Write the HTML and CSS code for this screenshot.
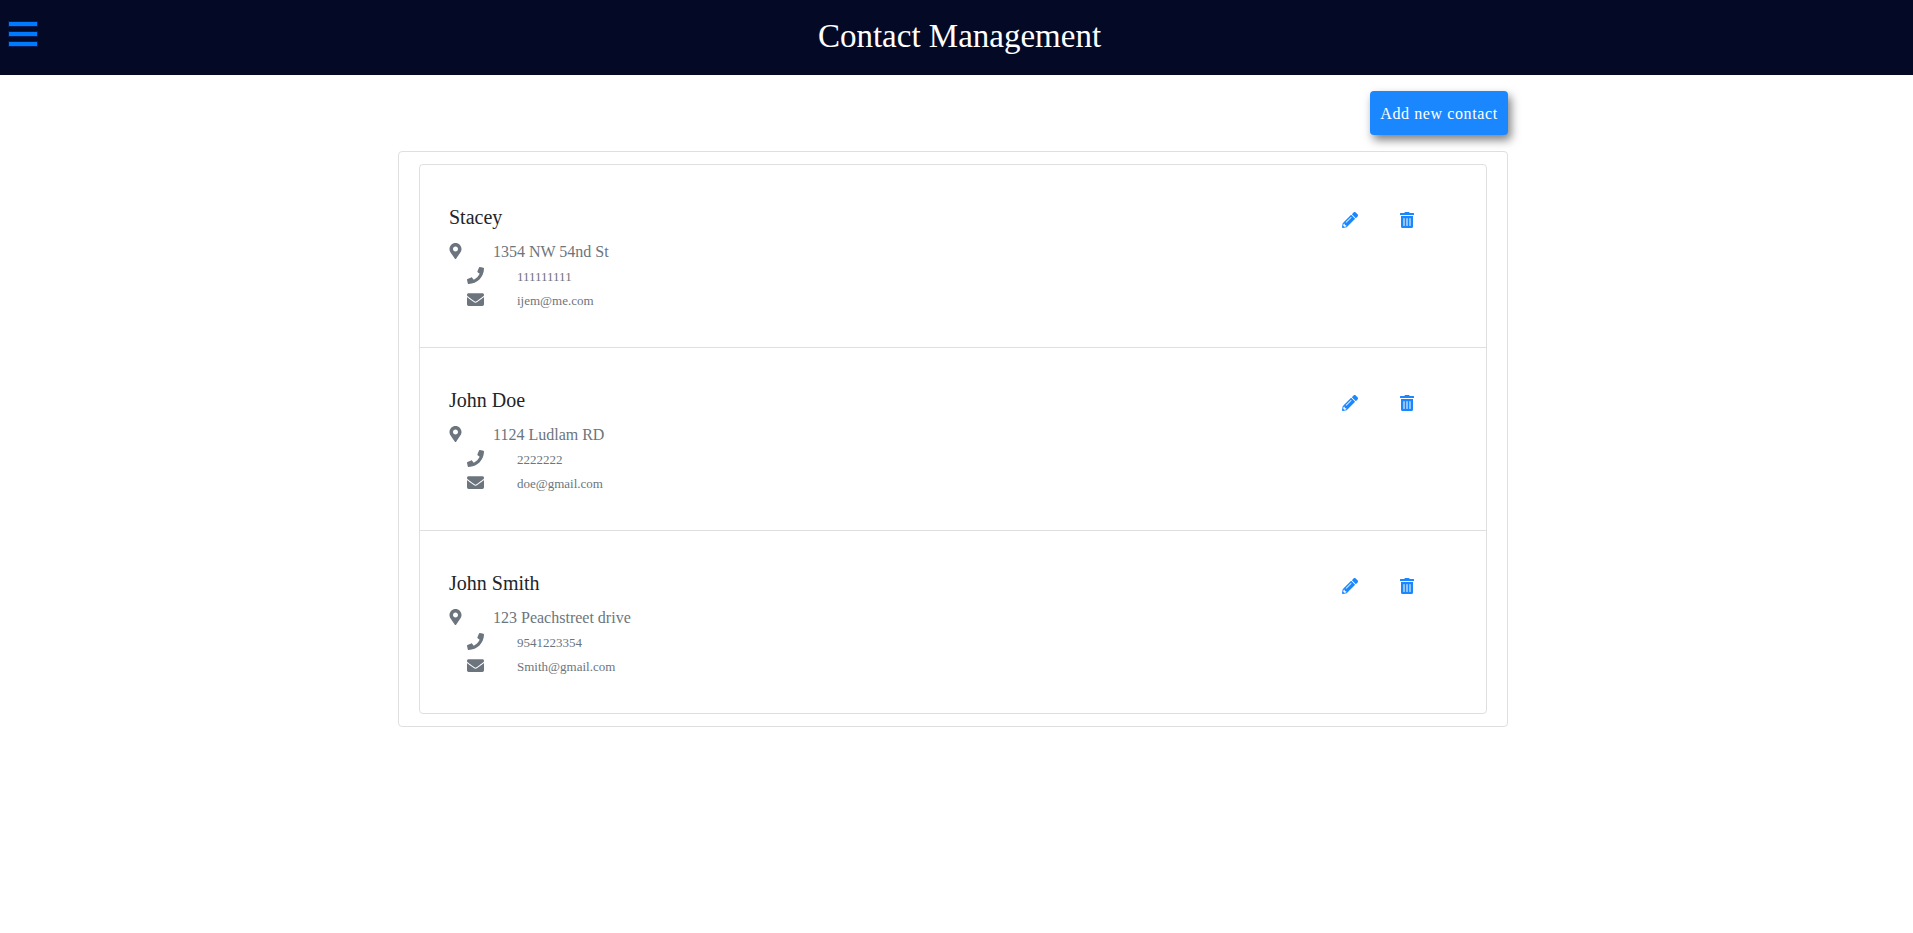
FILE: index.html
```html
<!DOCTYPE html>
<html lang="en">
<head>
    <meta charset="UTF-8">
    <title>Contact Management</title>
    <link rel="stylesheet" href="styles.css">
</head>
<body>
    <svg class="icon-defs" width="0" height="0">
        <symbol id="i-marker" viewBox="0 0 384 512"><path d="M172.268 501.67C26.97 291.031 0 269.413 0 192 0 85.961 85.961 0 192 0s192 85.961 192 192c0 77.413-26.97 99.031-172.268 309.67-9.535 13.774-29.93 13.773-39.464 0zM192 272c44.183 0 80-35.817 80-80s-35.817-80-80-80-80 35.817-80 80 35.817 80 80 80z"/></symbol>
        <symbol id="i-phone" viewBox="0 0 512 512"><path d="M493.4 24.6l-104-24c-11.3-2.6-22.9 3.3-27.5 13.9l-48 112c-4.2 9.8-1.4 21.3 6.9 28l60.6 49.6c-36 76.7-98.9 140.5-177.2 177.2l-49.6-60.6c-6.8-8.3-18.2-11.1-28-6.9l-112 48C3.9 366.5-2 378.1.6 389.4l24 104C27.1 504.2 36.7 512 48 512c256.1 0 464-207.5 464-464 0-11.2-7.7-20.9-18.6-23.4z"/></symbol>
        <symbol id="i-envelope" viewBox="0 0 512 512"><path d="M502.3 190.8c3.9-3.1 9.7-.2 9.7 4.7V400c0 26.5-21.5 48-48 48H48c-26.5 0-48-21.5-48-48V195.6c0-5 5.7-7.8 9.7-4.7 22.4 17.4 52.1 39.5 154.1 113.6 21.1 15.4 56.7 47.8 92.2 47.6 35.7.3 72-32.8 92.3-47.6 102-74.1 131.6-96.3 154-113.7zM256 320c23.2.4 56.6-29.2 73.4-41.4 132.7-96.3 142.8-104.7 173.4-128.7 5.8-4.5 9.2-11.5 9.2-18.9v-19c0-26.5-21.5-48-48-48H48C21.5 64 0 85.5 0 112v19c0 7.4 3.4 14.3 9.2 18.9 30.6 23.9 40.7 32.4 173.4 128.7 16.8 12.2 50.2 41.8 73.4 41.4z"/></symbol>
        <symbol id="i-pencil" viewBox="0 0 512 512"><path d="M497.9 142.1l-46.1 46.1c-4.7 4.7-12.3 4.7-17 0l-111-111c-4.7-4.7-4.7-12.3 0-17l46.1-46.1c18.7-18.7 49.1-18.7 67.9 0l60.1 60.1c18.8 18.7 18.8 49.1 0 67.9zM284.2 99.8L21.6 362.4.4 483.9c-2.9 16.4 11.4 30.6 27.8 27.8l121.5-21.3 262.6-262.6c4.7-4.7 4.7-12.3 0-17l-111-111c-4.8-4.7-12.4-4.7-17.1 0zM124.1 339.9c-5.5-5.5-5.5-14.3 0-19.8l154-154c5.5-5.5 14.3-5.5 19.8 0s5.5 14.3 0 19.8l-154 154c-5.5 5.5-14.3 5.5-19.8 0zM88 424h48v36.3l-64.5 11.3-31.1-31.1L51.7 376H88v48z"/></symbol>
        <symbol id="i-trash" viewBox="0 0 448 512"><path d="M32 464a48 48 0 0 0 48 48h288a48 48 0 0 0 48-48V128H32zm272-256a16 16 0 0 1 32 0v224a16 16 0 0 1-32 0zm-96 0a16 16 0 0 1 32 0v224a16 16 0 0 1-32 0zm-96 0a16 16 0 0 1 32 0v224a16 16 0 0 1-32 0zM432 32H312l-9.4-18.7A24 24 0 0 0 281.1 0H166.8a23.72 23.72 0 0 0-21.4 13.3L136 32H16A16 16 0 0 0 0 48v32a16 16 0 0 0 16 16h416a16 16 0 0 0 16-16V48a16 16 0 0 0-16-16z"/></symbol>
    </svg>

    <header class="topbar">
        <div class="menu-btn"><span></span><span></span><span></span></div>
        <h1 class="topbar-title">Contact Management</h1>
    </header>

    <main class="page">
        <div class="container">
            <div class="toolbar">
                <button class="add-btn">Add new contact</button>
            </div>
            <div class="outer-card">
                <ul class="contact-list">
                    <li class="contact">
                        <div class="contact-info">
                            <h2 class="contact-name">Stacey</h2>
                            <div class="line line-address"><svg class="ic-marker"><use href="#i-marker"/></svg><span>1354 NW 54nd St</span></div>
                            <div class="line line-small"><svg class="ic-small"><use href="#i-phone"/></svg><span>111111111</span></div>
                            <div class="line line-small"><svg class="ic-small"><use href="#i-envelope"/></svg><span>ijem@me.com</span></div>
                        </div>
                        <div class="contact-actions">
                            <svg class="ic-edit"><use href="#i-pencil"/></svg>
                            <svg class="ic-delete"><use href="#i-trash"/></svg>
                        </div>
                    </li>
                    <li class="contact">
                        <div class="contact-info">
                            <h2 class="contact-name">John Doe</h2>
                            <div class="line line-address"><svg class="ic-marker"><use href="#i-marker"/></svg><span>1124 Ludlam RD</span></div>
                            <div class="line line-small"><svg class="ic-small"><use href="#i-phone"/></svg><span>2222222</span></div>
                            <div class="line line-small"><svg class="ic-small"><use href="#i-envelope"/></svg><span>doe@gmail.com</span></div>
                        </div>
                        <div class="contact-actions">
                            <svg class="ic-edit"><use href="#i-pencil"/></svg>
                            <svg class="ic-delete"><use href="#i-trash"/></svg>
                        </div>
                    </li>
                    <li class="contact">
                        <div class="contact-info">
                            <h2 class="contact-name">John Smith</h2>
                            <div class="line line-address"><svg class="ic-marker"><use href="#i-marker"/></svg><span>123 Peachstreet drive</span></div>
                            <div class="line line-small"><svg class="ic-small"><use href="#i-phone"/></svg><span>9541223354</span></div>
                            <div class="line line-small"><svg class="ic-small"><use href="#i-envelope"/></svg><span>Smith@gmail.com</span></div>
                        </div>
                        <div class="contact-actions">
                            <svg class="ic-edit"><use href="#i-pencil"/></svg>
                            <svg class="ic-delete"><use href="#i-trash"/></svg>
                        </div>
                    </li>
                </ul>
            </div>
        </div>
    </main>
</body>
</html>
```

FILE: styles.css
```css
body {
    margin: 0;
    background: #fff;
    font-family: "Liberation Serif", "Times New Roman", serif;
    color: #212529;
}
.icon-defs {
    position: absolute;
}
.topbar {
    height: 75px;
    background: #040a26;
    display: flex;
    align-items: center;
    justify-content: center;
    position: relative;
}
.menu-btn {
    position: absolute;
    left: 9px;
    top: 22px;
    display: flex;
    flex-direction: column;
    gap: 6px;
}
.menu-btn span {
    display: block;
    width: 28px;
    height: 4px;
    background: #007bff;
    box-shadow: 0 0 0 1px rgba(0,70,200,0.3);
}
.topbar-title {
    margin: 0;
    padding: 0 0 2px 6px;
    color: #fff;
    font-size: 33px;
    font-weight: 400;
    line-height: 1.2;
}
.page {
    padding-right: 7px;
}
.container {
    width: 1110px;
    margin: 0 auto;
}
.toolbar {
    display: flex;
    justify-content: flex-end;
    padding: 16px 0;
}
.add-btn {
    width: 138px;
    height: 44px;
    padding: 2px 0 0;
    border: 0;
    border-radius: 4px;
    background: #1a87ff;
    color: #fff;
    font-family: inherit;
    font-size: 16px;
    letter-spacing: 0.6px;
    box-shadow: 3px 5px 10px rgba(0,0,0,0.5);
}
.outer-card {
    border: 1px solid #dfdfdf;
    border-radius: 4px;
    padding: 12px 20px;
}
.contact-list {
    list-style: none;
    margin: 0;
    padding: 0;
    border: 1px solid #dfdfdf;
    border-radius: 4px;
}
.contact {
    height: 182px;
    display: flex;
    justify-content: space-between;
    padding: 0 0 0 29px;
    border-bottom: 1px solid #dfdfdf;
}
.contact:last-child {
    border-bottom: 0;
}
.contact-name {
    margin: 40px 0 11px;
    font-size: 20px;
    font-weight: 400;
    line-height: 24px;
    color: #212529;
}
.line {
    display: flex;
    align-items: center;
    color: #6c757d;
}
.line-address {
    height: 24px;
    font-size: 16px;
}
.line-small {
    height: 24px;
    padding-left: 18px;
    font-size: 13px;
}
.line-small span {
    padding-top: 2px;
}
.ic-marker {
    width: 13px;
    height: 16px;
    margin-top: -2px;
    margin-right: 31px;
    fill: #6c757d;
}
.ic-small {
    width: 17px;
    height: 17px;
    margin-top: -2px;
    margin-right: 33px;
    fill: #6c757d;
}
.contact-actions {
    display: flex;
    gap: 42px;
    padding: 47px 72px 0 0;
    align-items: flex-start;
}
.ic-edit {
    width: 16px;
    height: 16px;
    fill: #1a87ff;
}
.ic-delete {
    width: 14px;
    height: 16px;
    fill: #1a87ff;
}
```
